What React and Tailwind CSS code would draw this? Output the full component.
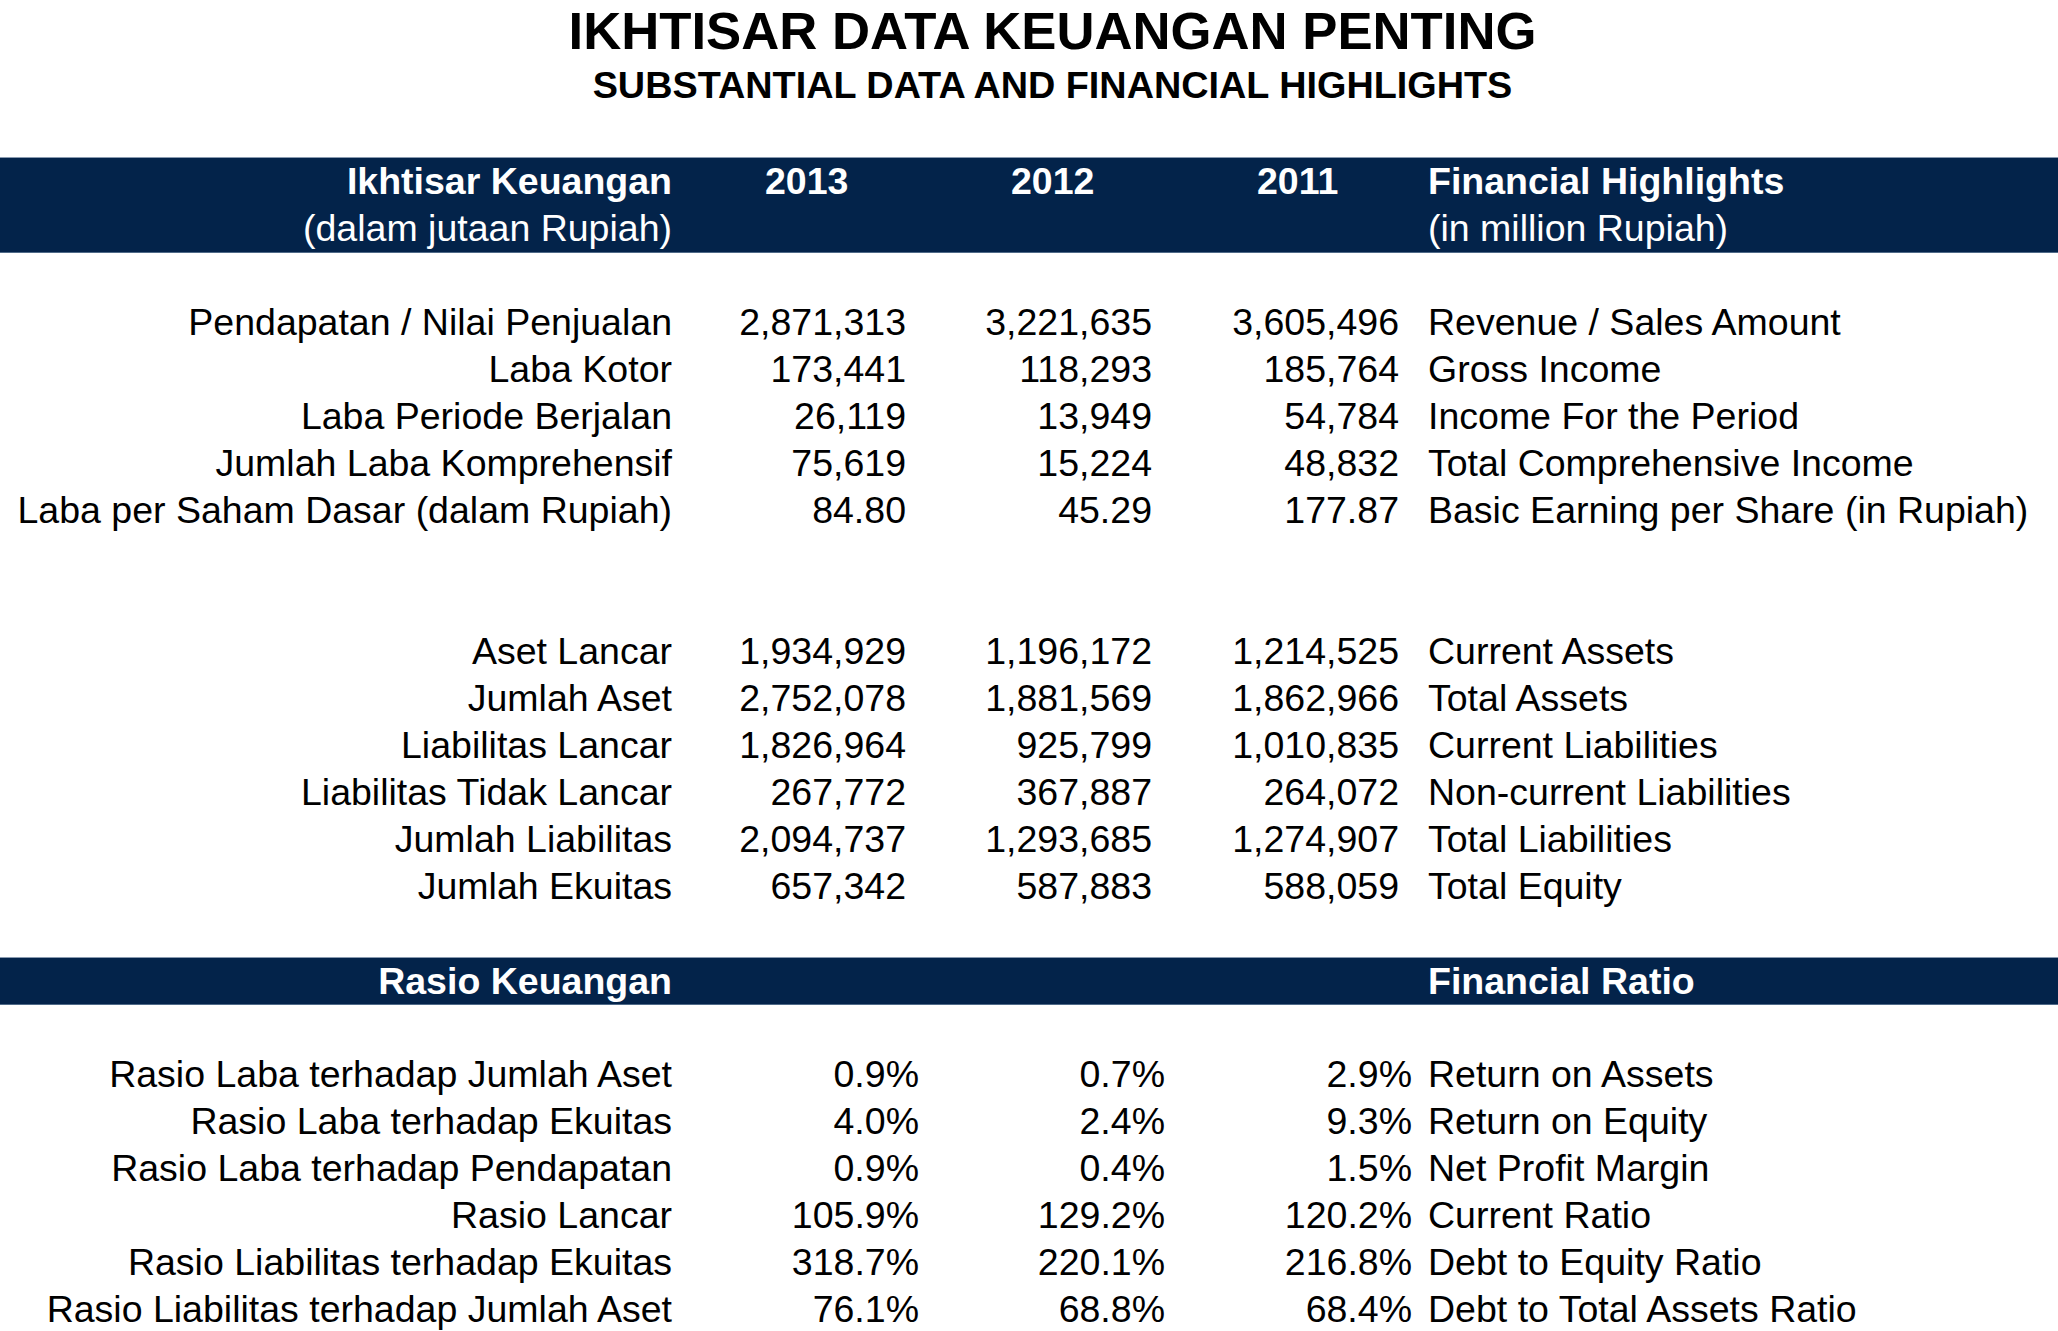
import React from "react";

const FONT = { fontFamily: '"Liberation Sans", Arial, sans-serif' };

const group1 = [
  ["Pendapatan / Nilai Penjualan", "2,871,313", "3,221,635", "3,605,496", "Revenue / Sales Amount"],
  ["Laba Kotor", "173,441", "118,293", "185,764", "Gross Income"],
  ["Laba Periode Berjalan", "26,119", "13,949", "54,784", "Income For the Period"],
  ["Jumlah Laba Komprehensif", "75,619", "15,224", "48,832", "Total Comprehensive Income"],
  ["Laba per Saham Dasar (dalam Rupiah)", "84.80", "45.29", "177.87", "Basic Earning per Share (in Rupiah)"],
];

const group2 = [
  ["Aset Lancar", "1,934,929", "1,196,172", "1,214,525", "Current Assets"],
  ["Jumlah Aset", "2,752,078", "1,881,569", "1,862,966", "Total Assets"],
  ["Liabilitas Lancar", "1,826,964", "925,799", "1,010,835", "Current Liabilities"],
  ["Liabilitas Tidak Lancar", "267,772", "367,887", "264,072", "Non-current Liabilities"],
  ["Jumlah Liabilitas", "2,094,737", "1,293,685", "1,274,907", "Total Liabilities"],
  ["Jumlah Ekuitas", "657,342", "587,883", "588,059", "Total Equity"],
];

const group3 = [
  ["Rasio Laba terhadap Jumlah Aset", "0.9%", "0.7%", "2.9%", "Return on Assets"],
  ["Rasio Laba terhadap Ekuitas", "4.0%", "2.4%", "9.3%", "Return on Equity"],
  ["Rasio Laba terhadap Pendapatan", "0.9%", "0.4%", "1.5%", "Net Profit Margin"],
  ["Rasio Lancar", "105.9%", "129.2%", "120.2%", "Current Ratio"],
  ["Rasio Liabilitas terhadap Ekuitas", "318.7%", "220.1%", "216.8%", "Debt to Equity Ratio"],
  ["Rasio Liabilitas terhadap Jumlah Aset", "76.1%", "68.8%", "68.4%", "Debt to Total Assets Ratio"],
];

function Row({ r, pct }) {
  const num = pct ? "text-right whitespace-nowrap" : "text-right whitespace-nowrap pr-[13px]";
  return (
    <div className="grid grid-cols-[672px_247px_246px_247px_1fr] h-[47px] leading-[47px]">
      <div className="text-right whitespace-nowrap">{r[0]}</div>
      <div className={num}>{r[1]}</div>
      <div className={num}>{r[2]}</div>
      <div className={num}>{r[3]}</div>
      <div className="pl-[16px] whitespace-nowrap">{r[4]}</div>
    </div>
  );
}

const Empty = () => <div className="h-[47px]" />;

export default function App() {
  return (
    <div className="w-[2058px] h-[1331px] bg-white text-black overflow-hidden" style={FONT}>
      <div className="pl-[47px] pt-[1px] text-center">
        <div className="text-[52.7px] font-bold leading-[60px]">IKHTISAR DATA KEUANGAN PENTING</div>
        <div className="text-[37.8px] font-bold leading-[48px]">SUBSTANTIAL DATA AND FINANCIAL HIGHLIGHTS</div>
      </div>
      <div className="h-[48px]" />
      <div className="text-[37.5px]">
        {/* header bar */}
        <div className="bg-[#03234a] text-white border-t border-t-[#8a9bb0] border-b border-b-[#4f6a88] h-[96px]">
          <div className="grid grid-cols-[672px_247px_246px_247px_1fr] h-[47px] leading-[47px] font-bold">
            <div className="text-right whitespace-nowrap">Ikhtisar Keuangan</div>
            <div className="pl-[93px]">2013</div>
            <div className="pl-[92px]">2012</div>
            <div className="pl-[92px]">2011</div>
            <div className="pl-[16px] whitespace-nowrap">Financial Highlights</div>
          </div>
          <div className="grid grid-cols-[672px_247px_246px_247px_1fr] h-[47px] leading-[47px]">
            <div className="text-right whitespace-nowrap">(dalam jutaan Rupiah)</div>
            <div />
            <div />
            <div />
            <div className="pl-[16px] whitespace-nowrap">(in million Rupiah)</div>
          </div>
        </div>
        <div className="h-[46px]" />
        {group1.map((r) => (
          <Row key={r[0]} r={r} />
        ))}
        <Empty />
        <Empty />
        {group2.map((r) => (
          <Row key={r[0]} r={r} />
        ))}
        <Empty />
        <div className="bg-[#03234a] text-white border-t border-t-[#8a9bb0] border-b border-b-[#4f6a88] h-[48px]">
          <div className="grid grid-cols-[672px_247px_246px_247px_1fr] h-[46px] leading-[46px] font-bold">
            <div className="text-right whitespace-nowrap">Rasio Keuangan</div>
            <div />
            <div />
            <div />
            <div className="pl-[16px] whitespace-nowrap">Financial Ratio</div>
          </div>
        </div>
        <div className="h-[46px]" />
        {group3.map((r) => (
          <Row key={r[0]} r={r} pct />
        ))}
      </div>
    </div>
  );
}
